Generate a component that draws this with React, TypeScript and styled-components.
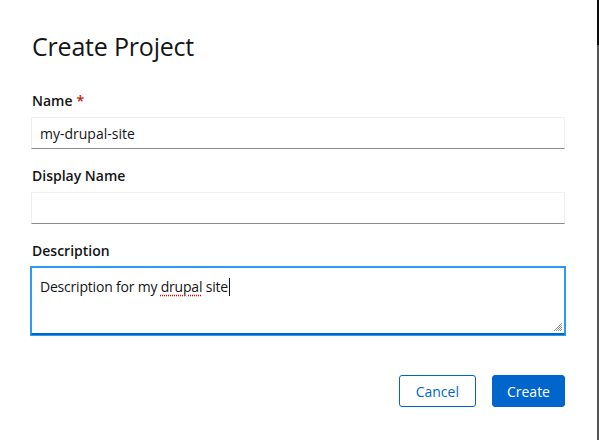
import * as React from 'react';
import styled, { createGlobalStyle } from 'styled-components';

const GlobalCss = createGlobalStyle`
  html, body {
    margin: 0;
    padding: 0;
    background: #ffffff;
  }
  body {
    font-family: "Open Sans", "Liberation Sans", sans-serif;
    color: #151515;
  }
`;

const Page = styled.div`
  display: flex;
  height: 440px;
  width: 599px;
  overflow: hidden;
`;

const Modal = styled.div`
  width: 597px;
  box-sizing: border-box;
  padding: 30px 32px 0 31px;
  background: #ffffff;
  display: flex;
  flex-direction: column;
`;

const Backdrop = styled.div`
  flex: 1;
  display: flex;
  flex-direction: column;
  background: #545454;
`;

const Masthead = styled.div`
  height: 45px;
  background: #0b0b0b;
`;

const Title = styled.h1`
  margin: 0 0 0 1px;
  font-size: 25px;
  line-height: 33px;
  font-weight: 400;
  letter-spacing: -0.2px;
  color: #151515;
`;

const Form = styled.form`
  display: flex;
  flex-direction: column;
  gap: 16px;
  margin-top: 27px;
`;

const Group = styled.div`
  display: flex;
  flex-direction: column;
  gap: 6px;
`;

const Label = styled.label`
  margin-left: 1px;
  font-size: 14px;
  line-height: 21px;
  font-weight: 600;
  color: #151515;
`;

const Required = styled.span`
  color: #c9190b;
  margin-left: 4px;
`;

const Input = styled.input`
  box-sizing: border-box;
  width: 100%;
  height: 32px;
  margin: 0;
  padding: 0 8px;
  font-family: inherit;
  font-size: 14px;
  color: #151515;
  background: #ffffff;
  border: 1px solid #f0f0f0;
  border-bottom-color: #8a8d90;
  border-radius: 0;
  outline: none;
`;

const TextArea = styled.div`
  position: relative;
  box-sizing: border-box;
  width: 100%;
  height: 68px;
  padding: 8px 8px;
  font-size: 14px;
  line-height: 21px;
  letter-spacing: -0.2px;
  color: #151515;
  background: #ffffff;
  border: 1px solid #2b9af3;
  border-bottom: 2px solid #0066cc;
  box-shadow: 0 0 0 1px #2b9af3;
`;

const Misspelled = styled.span`
  text-decoration: underline dotted #e00000;
  text-underline-offset: 3px;
`;

const Caret = styled.span`
  display: inline-block;
  width: 1px;
  height: 18px;
  margin-left: 1px;
  vertical-align: -4px;
  background: #151515;
`;

const Grip = styled.svg`
  position: absolute;
  right: 1px;
  bottom: 1px;
`;

const Actions = styled.div`
  display: flex;
  justify-content: flex-end;
  gap: 16px;
  margin-top: 40px;
`;

const Button = styled.button<{ $primary?: boolean }>`
  height: 32px;
  padding: 0 ${(p) => (p.$primary ? '14px' : '16px')};
  font-family: inherit;
  font-size: 14px;
  border-radius: 3px;
  cursor: pointer;
  color: ${(p) => (p.$primary ? '#ffffff' : '#0066cc')};
  background: ${(p) => (p.$primary ? '#0066cc' : '#ffffff')};
  border: 1px solid #0066cc;
`;

export default function App() {
  return (
    <>
      <GlobalCss />
      <Page>
        <Modal>
          <Title>Create Project</Title>
          <Form onSubmit={(e) => e.preventDefault()}>
            <Group>
              <Label htmlFor="name">
                Name<Required>*</Required>
              </Label>
              <Input id="name" defaultValue="my-drupal-site" />
            </Group>
            <Group>
              <Label htmlFor="display-name">Display Name</Label>
              <Input id="display-name" defaultValue="" />
            </Group>
            <Group>
              <Label>Description</Label>
              <TextArea role="textbox">
                Description for my <Misspelled>drupal</Misspelled> site
                <Caret />
                <Grip width="10" height="10" viewBox="0 0 10 10">
                  <path
                    d="M9 1 L1 9 M9 3 L3 9 M9 5 L5 9 M9 7 L7 9"
                    stroke="#9a9a9a"
                    strokeWidth="1"
                    fill="none"
                  />
                </Grip>
              </TextArea>
            </Group>
          </Form>
          <Actions>
            <Button type="button">Cancel</Button>
            <Button type="button" $primary>
              Create
            </Button>
          </Actions>
        </Modal>
        <Backdrop>
          <Masthead />
        </Backdrop>
      </Page>
    </>
  );
}
